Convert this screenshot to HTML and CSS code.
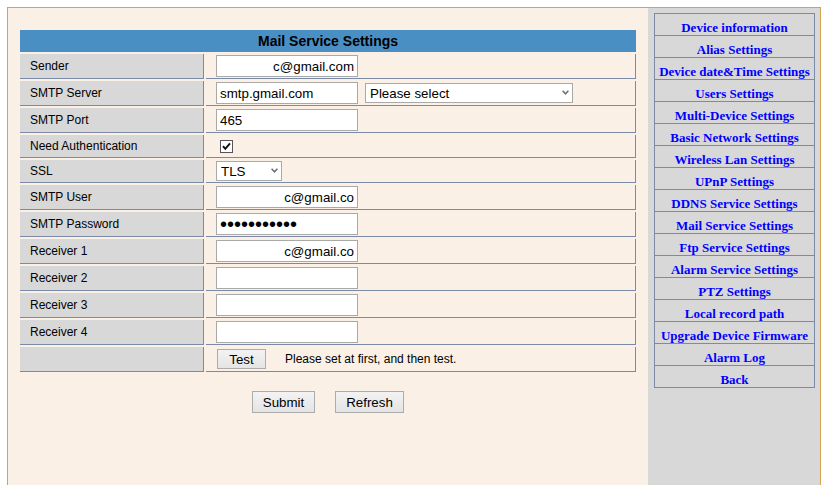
FILE: index.html
```html
<!DOCTYPE html>
<html lang="en">
<head>
    <meta charset="UTF-8">
    <title>Mail Service Settings</title>
    <link rel="stylesheet" href="styles.css">
</head>
<body>
    <div class="frame">
        <div class="main">
            <table class="settings">
                <colgroup>
                    <col class="col-label">
                    <col class="col-value">
                </colgroup>
                <tr>
                    <th colspan="2" class="title">Mail Service Settings</th>
                </tr>
                <tr>
                    <td class="label">Sender</td>
                    <td class="value"><div class="field"><input class="text right" type="text" value="c@gmail.com"></div></td>
                </tr>
                <tr>
                    <td class="label">SMTP Server</td>
                    <td class="value">
                        <div class="field">
                            <input class="text" type="text" value="smtp.gmail.com">
                            <span class="select">
                                <select class="server-list">
                                    <option>Please select</option>
                                    <option>smtp.gmail.com</option>
                                </select>
                                <svg width="7" height="5" viewBox="0 0 7 5"><path d="M0.6 0.8 L3.5 3.8 L6.4 0.8" fill="none" stroke="#707070" stroke-width="1.6"/></svg>
                            </span>
                        </div>
                    </td>
                </tr>
                <tr>
                    <td class="label">SMTP Port</td>
                    <td class="value"><div class="field"><input class="text" type="text" value="465"></div></td>
                </tr>
                <tr class="short">
                    <td class="label">Need Authentication</td>
                    <td class="value">
                        <div class="field">
                            <span class="check">
                                <svg width="13" height="13" viewBox="0 0 13 13"><rect x="0.5" y="0.5" width="12" height="12" fill="#fff" stroke="#555"/><path d="M3 6.2 L5.3 8.8 L10 3.4" fill="none" stroke="#111" stroke-width="2"/></svg>
                            </span>
                        </div>
                    </td>
                </tr>
                <tr class="short">
                    <td class="label">SSL</td>
                    <td class="value">
                        <div class="field">
                            <span class="select">
                                <select class="ssl-list">
                                    <option>TLS</option>
                                    <option>SSL</option>
                                    <option>None</option>
                                </select>
                                <svg width="7" height="5" viewBox="0 0 7 5"><path d="M0.6 0.8 L3.5 3.8 L6.4 0.8" fill="none" stroke="#707070" stroke-width="1.6"/></svg>
                            </span>
                        </div>
                    </td>
                </tr>
                <tr>
                    <td class="label">SMTP User</td>
                    <td class="value"><div class="field"><input class="text right" type="text" value="c@gmail.co"></div></td>
                </tr>
                <tr>
                    <td class="label">SMTP Password</td>
                    <td class="value"><div class="field"><input class="text pass" type="password" value="abcdefghijk"></div></td>
                </tr>
                <tr>
                    <td class="label">Receiver 1</td>
                    <td class="value"><div class="field"><input class="text right" type="text" value="c@gmail.co"></div></td>
                </tr>
                <tr>
                    <td class="label">Receiver 2</td>
                    <td class="value"><div class="field"><input class="text" type="text"></div></td>
                </tr>
                <tr>
                    <td class="label">Receiver 3</td>
                    <td class="value"><div class="field"><input class="text" type="text"></div></td>
                </tr>
                <tr>
                    <td class="label">Receiver 4</td>
                    <td class="value"><div class="field"><input class="text" type="text"></div></td>
                </tr>
                <tr>
                    <td class="label"></td>
                    <td class="value">
                        <div class="field">
                            <button type="button" class="btn test-btn">Test</button>
                            <span class="hint">Please set at first, and then test.</span>
                        </div>
                    </td>
                </tr>
            </table>

            <div class="actions">
                <button type="button" class="btn submit-btn">Submit</button>
                <button type="button" class="btn refresh-btn">Refresh</button>
            </div>
        </div>

        <div class="side">
            <ul class="menu">
                <li><a href="#">Device information</a></li>
                <li><a href="#">Alias Settings</a></li>
                <li><a href="#">Device date&amp;Time Settings</a></li>
                <li><a href="#">Users Settings</a></li>
                <li><a href="#">Multi-Device Settings</a></li>
                <li><a href="#">Basic Network Settings</a></li>
                <li><a href="#">Wireless Lan Settings</a></li>
                <li><a href="#">UPnP Settings</a></li>
                <li><a href="#">DDNS Service Settings</a></li>
                <li><a href="#">Mail Service Settings</a></li>
                <li><a href="#">Ftp Service Settings</a></li>
                <li><a href="#">Alarm Service Settings</a></li>
                <li><a href="#">PTZ Settings</a></li>
                <li><a href="#">Local record path</a></li>
                <li><a href="#">Upgrade Device Firmware</a></li>
                <li><a href="#">Alarm Log</a></li>
                <li><a href="#">Back</a></li>
            </ul>
        </div>
    </div>
</body>
</html>
```

FILE: styles.css
```css
:root {
    --cream: #faf0e6;
    --gray: #d8d8d8;
    --line: #7b8ba7;
    --gold: #d5a253;
    --blue: #4a8fc4;
}

* {
    box-sizing: border-box;
}

html, body {
    margin: 0;
    padding: 0;
    background: #fff;
    overflow: hidden;
}

body {
    font-family: "Liberation Sans", Arial, sans-serif;
    font-size: 12px;
    color: #000;
}

.frame {
    display: flex;
    margin: 7px 0 0 7px;
    width: 814px;
    height: 478px;
    border: 1px solid var(--gold);
    border-bottom: none;
}

.main {
    width: 640px;
    background: var(--cream);
    padding: 20px 0 0 10px;
}

.side {
    width: 172px;
    background: var(--gray);
    padding: 5px 0 0 6px;
}

/* settings table */

.settings {
    border-collapse: separate;
    border-spacing: 2px;
    width: 620px;
    table-layout: fixed;
}

.col-label {
    width: 184px;
}

.col-value {
    width: 430px;
}

.title {
    background: var(--blue);
    height: 22px;
    padding: 0;
    font-size: 14px;
    font-weight: bold;
    text-align: center;
}

.label,
.value {
    box-sizing: content-box;
    height: 24px;
    padding: 0 0 0 10px;
    border-right: 1px solid var(--line);
    border-bottom: 1px solid var(--line);
    vertical-align: middle;
}

.short .label,
.short .value {
    height: 22px;
}

.label {
    background: var(--gray);
}

.field {
    display: flex;
    align-items: center;
    gap: 7px;
}

.text {
    width: 142px;
    height: 22px;
    margin: 0;
    padding: 1px 3px;
    border: 1px solid #a9a9a9;
    border-radius: 0;
    background: #fff;
    font-family: "Liberation Sans", Arial, sans-serif;
    font-size: 13.33px;
    color: #000;
    outline: none;
}

.right {
    text-align: right;
}

.pass {
    font-size: 20px;
}

.select {
    position: relative;
    display: inline-block;
    height: 20px;
}

.select select {
    appearance: none;
    -webkit-appearance: none;
    height: 20px;
    margin: 0;
    padding: 0 0 0 4px;
    border: 1px solid #a9a9a9;
    border-radius: 0;
    background: #fff;
    font-family: "Liberation Sans", Arial, sans-serif;
    font-size: 13.33px;
    color: #000;
    outline: none;
}

.select svg {
    position: absolute;
    right: 4px;
    top: 7px;
}

.server-list {
    width: 208px;
}

.ssl-list {
    width: 66px;
}

.check {
    display: inline-block;
    width: 13px;
    height: 13px;
    margin-left: 4px;
}

.check svg {
    display: block;
}

/* buttons */

.btn {
    height: 22px;
    margin: 0;
    padding: 0;
    border: 1px solid #acacac;
    border-radius: 0;
    background: linear-gradient(#f3f3f3, #e4e4e4);
    font-family: "Liberation Sans", Arial, sans-serif;
    font-size: 13.33px;
    color: #000;
}

.test-btn {
    width: 49px;
    height: 20px;
    margin-left: 1px;
}

.hint {
    margin-left: 12px;
    font-size: 12px;
}

.actions {
    display: flex;
    justify-content: center;
    gap: 20px;
    width: 620px;
    margin-top: 17px;
}

.submit-btn {
    width: 63px;
}

.refresh-btn {
    width: 69px;
}

/* side menu */

.menu {
    list-style: none;
    margin: 0;
    padding: 0;
    width: 161px;
    border: 1px solid var(--line);
    border-bottom: none;
}

.menu li {
    height: 22px;
    border-bottom: 1px solid var(--line);
}

.menu a {
    display: block;
    padding-top: 7px;
    line-height: 14px;
    text-align: center;
    font-family: "Liberation Serif", "Times New Roman", serif;
    font-size: 13px;
    font-weight: bold;
    color: #0000ff;
    text-decoration: none;
    white-space: nowrap;
}
```
